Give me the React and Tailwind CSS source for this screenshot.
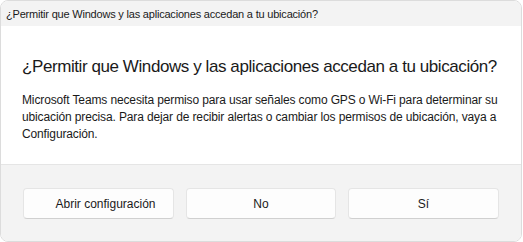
export default function App() {
  const font = { fontFamily: '"Segoe UI", "Liberation Sans", Arial, sans-serif' };
  return (
    <div className="w-[523px] h-[242px] bg-white" style={font}>
      <div className="w-[522px] h-[242px] flex flex-col border border-[#dcdcdc] rounded-[8px] overflow-hidden bg-white">
        <div className="h-[25px] shrink-0 bg-[#f3f3f3] flex items-center pl-[5px] pt-[1px] text-[11px] text-[#1a1a1a] tracking-[-0.2px]">
          ¿Permitir que Windows y las aplicaciones accedan a tu ubicación?
        </div>
        <div className="h-[138px] shrink-0 bg-white px-[21px] pt-[29px]">
          <h1 className="text-[17px] leading-[24px] text-[#1a1a1a] tracking-[-0.42px] whitespace-nowrap">
            ¿Permitir que Windows y las aplicaciones accedan a tu ubicación?
          </h1>
          <p className="mt-[13px] text-[12px] leading-[17px] text-[#1a1a1a] tracking-[-0.13px] whitespace-nowrap">
            Microsoft Teams necesita permiso para usar señales como GPS o Wi-Fi para determinar su
            <br />
            ubicación precisa. Para dejar de recibir alertas o cambiar los permisos de ubicación, vaya a
            <br />
            Configuración.
          </p>
        </div>
        <div className="flex-1 bg-[#f3f3f3] border-t border-[#e5e5e5] px-[22px] pt-[23px] flex gap-[12px] items-start">
          <button className="w-[151px] h-[31px] bg-[#fdfdfd] border border-[#e5e5e5] border-b-[#d0d0d0] rounded-[4px] text-[12px] text-[#1a1a1a] pl-[14px]">Abrir configuración</button>
          <button className="w-[150px] h-[31px] bg-[#fdfdfd] border border-[#e5e5e5] border-b-[#d0d0d0] rounded-[4px] text-[12px] text-[#1a1a1a]">No</button>
          <button className="w-[151px] h-[31px] bg-[#fdfdfd] border border-[#e5e5e5] border-b-[#d0d0d0] rounded-[4px] text-[12px] text-[#1a1a1a]">Sí</button>
        </div>
      </div>
    </div>
  );
}
